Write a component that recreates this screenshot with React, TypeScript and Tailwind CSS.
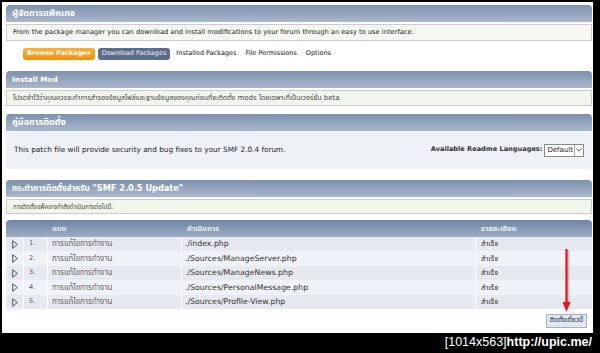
import React from "react";

const catbg = "bg-[linear-gradient(#7d91ae,#a9b8cc)]";

function CatBar({ children, size = "text-[9px]" }: { children: React.ReactNode; size?: string }) {
  return (
    <div className={`h-[17px] rounded-t-[4px] ${catbg} flex items-center pl-[6px] text-white font-bold ${size} leading-none`}>
      {children}
    </div>
  );
}

function Tri() {
  return (
    <svg width="6" height="9" viewBox="0 0 6 9" className="block">
      <path d="M0.7 0.7 L5.3 4.5 L0.7 8.3 Z" fill="none" stroke="#4a5566" strokeWidth="1" />
    </svg>
  );
}

const rows = [
  "./index.php",
  "./Sources/ManageServer.php",
  "./Sources/ManageNews.php",
  "./Sources/PersonalMessage.php",
  "./Sources/Profile-View.php",
];

export default function App() {
  return (
    <div className="w-[600px] h-[353px] bg-black overflow-hidden relative font-['DejaVu_Sans','Noto_Sans_Thai','Noto_Sans',sans-serif] text-[#333]">
      <div className="ml-[2px] mt-[2px] w-[591px] h-[331px] bg-white pl-[4px] pr-[1px] pt-[3px] flex flex-col">
        <CatBar>ผู้จัดการแพ็คเกจ</CatBar>
        <div className="mt-[2px] h-[17px] border border-[#ccc] bg-[#f6f6f2] flex items-center pl-[6px] text-[6.7px] text-[#222]">
          From the package manager you can download and install modifications to your forum through an easy to use interface.
        </div>
        <div className="mt-[6px] h-[13px] flex items-center text-[6.5px] text-[#111] pl-[17px]">
          <span className="h-[12px] px-[4px] rounded-[3px] bg-[linear-gradient(#fbb03b,#f3900d)] text-white font-bold flex items-center">Browse Packages</span>
          <span className="ml-[3px] h-[12px] px-[4px] rounded-[3px] bg-[#5b6d88] text-[#eef] flex items-center">Download Packages</span>
          <span className="ml-[6px]">Installed Packages</span>
          <span className="ml-[9px]">File Permissions</span>
          <span className="ml-[9px]">Options</span>
        </div>
        <div className="mt-[11px]">
          <CatBar size="text-[7.3px]">Install Mod</CatBar>
        </div>
        <div className="mt-[2px] h-[16px] border border-[#ccc] bg-[#f2f5ec] flex items-center pl-[6px] text-[7px] text-[#444]">
          โปรดจำไว้ว่าคุณควรจะทำการสำรองข้อมูลไฟล์และฐานข้อมูลของคุณก่อนที่จะติดตั้ง mods โดยเฉพาะที่เป็นเวอร์ชั่น beta
        </div>
        <div className="mt-[8px]">
          <CatBar>คู่มือการติดตั้ง</CatBar>
        </div>
        <div className="h-[38px] bg-[#eef1f5] rounded-b-[4px] flex items-center pl-[8px] pr-[8px] text-[7.3px] text-[#222]">
          <span>This patch file will provide security and bug fixes to your SMF 2.0.4 forum.</span>
          <span className="ml-auto font-bold text-[#333] text-[6.6px]">Available Readme Languages:</span>
          <span className="ml-[2px] h-[13px] border border-[#888] bg-white flex items-center pl-[2px] text-[7px]">
            Default
            <span className="ml-[1px] w-[9px] h-[11px] border-l border-[#aaa] flex items-center justify-center">
              <svg width="6" height="4" viewBox="0 0 6 4"><path d="M0.5 0.5 L3 3.2 L5.5 0.5" fill="none" stroke="#555" strokeWidth="1" /></svg>
            </span>
          </span>
        </div>
        <div className="mt-[11px]">
          <CatBar size="text-[8.2px]">กระทำการติดตั้งสำหรับ "SMF 2.0.5 Update"</CatBar>
        </div>
        <div className="mt-[2px] h-[15px] border border-[#ccc] bg-[#f2f5ec] flex items-center pl-[6px] text-[6.1px] text-[#444]">
          การติดตั้งแพ็คเกจกำลังดำเนินการต่อไปนี้:
        </div>
        <div className="mt-[6px] h-[17px] rounded-t-[4px] bg-[linear-gradient(#6f85a4,#9cadc3)] flex items-center text-[#eef2f7] font-bold text-[7.5px]">
          <span className="w-[42px]" />
          <span className="w-[134px] pl-[4px]">แบบ</span>
          <span className="w-[294px] pl-[5px]">ดำเนินการ</span>
          <span className="pl-[5px]">รายละเอียด</span>
        </div>
        <div className="flex flex-col">
          {rows.map((r, i) => (
            <div
              key={r}
              className={`flex items-stretch text-[6.5px] ${i % 2 === 0 ? "bg-[#e6e9ef]" : "bg-[#eff2f6]"} ${i % 2 === 0 ? "h-[14px]" : "h-[15px]"}`}
            >
              <span className="w-[18px] border-r border-white flex items-center justify-center"><Tri /></span>
              <span className="w-[24px] border-r border-white flex items-center pl-[5px] text-[#555]">{i + 1}.</span>
              <span className="w-[134px] border-r border-white flex items-center pl-[4px] text-[#666] text-[8px]">การแก้ไขการทำงาน</span>
              <span className="w-[294px] border-r border-white flex items-center pl-[3px] text-[7.8px] text-[#333]">{r}</span>
              <span className="flex items-center pl-[5px] text-[#333] text-[7.5px]">สำเร็จ</span>
            </div>
          ))}
        </div>
        <div className="mt-[5px] flex justify-end pr-[5px]">
          <span className="h-[14px] px-[3px] border border-[#9fb0c8] bg-[#dfe8f4] flex items-center text-[6.6px] text-[#223]">ติดตั้งเดี๋ยวนี้</span>
        </div>
      </div>
      <svg className="absolute left-[559px] top-[248px]" width="16" height="68" viewBox="0 0 16 68">
        <path d="M9 2 L9 58" stroke="#777" strokeOpacity="0.35" strokeWidth="3" />
        <path d="M7.5 1 L7.5 57" stroke="#e8141c" strokeWidth="2.2" />
        <path d="M3.5 54 L7.5 64 L11.5 54 Z" fill="#e8141c" />
      </svg>
      <div className="absolute right-[8px] bottom-[2px] h-[18px] flex items-center text-white text-[12.5px] font-['Liberation_Sans',sans-serif]">
        <span>[1014x563]</span>
        <span className="font-bold">http://upic.me/</span>
      </div>
    </div>
  );
}
